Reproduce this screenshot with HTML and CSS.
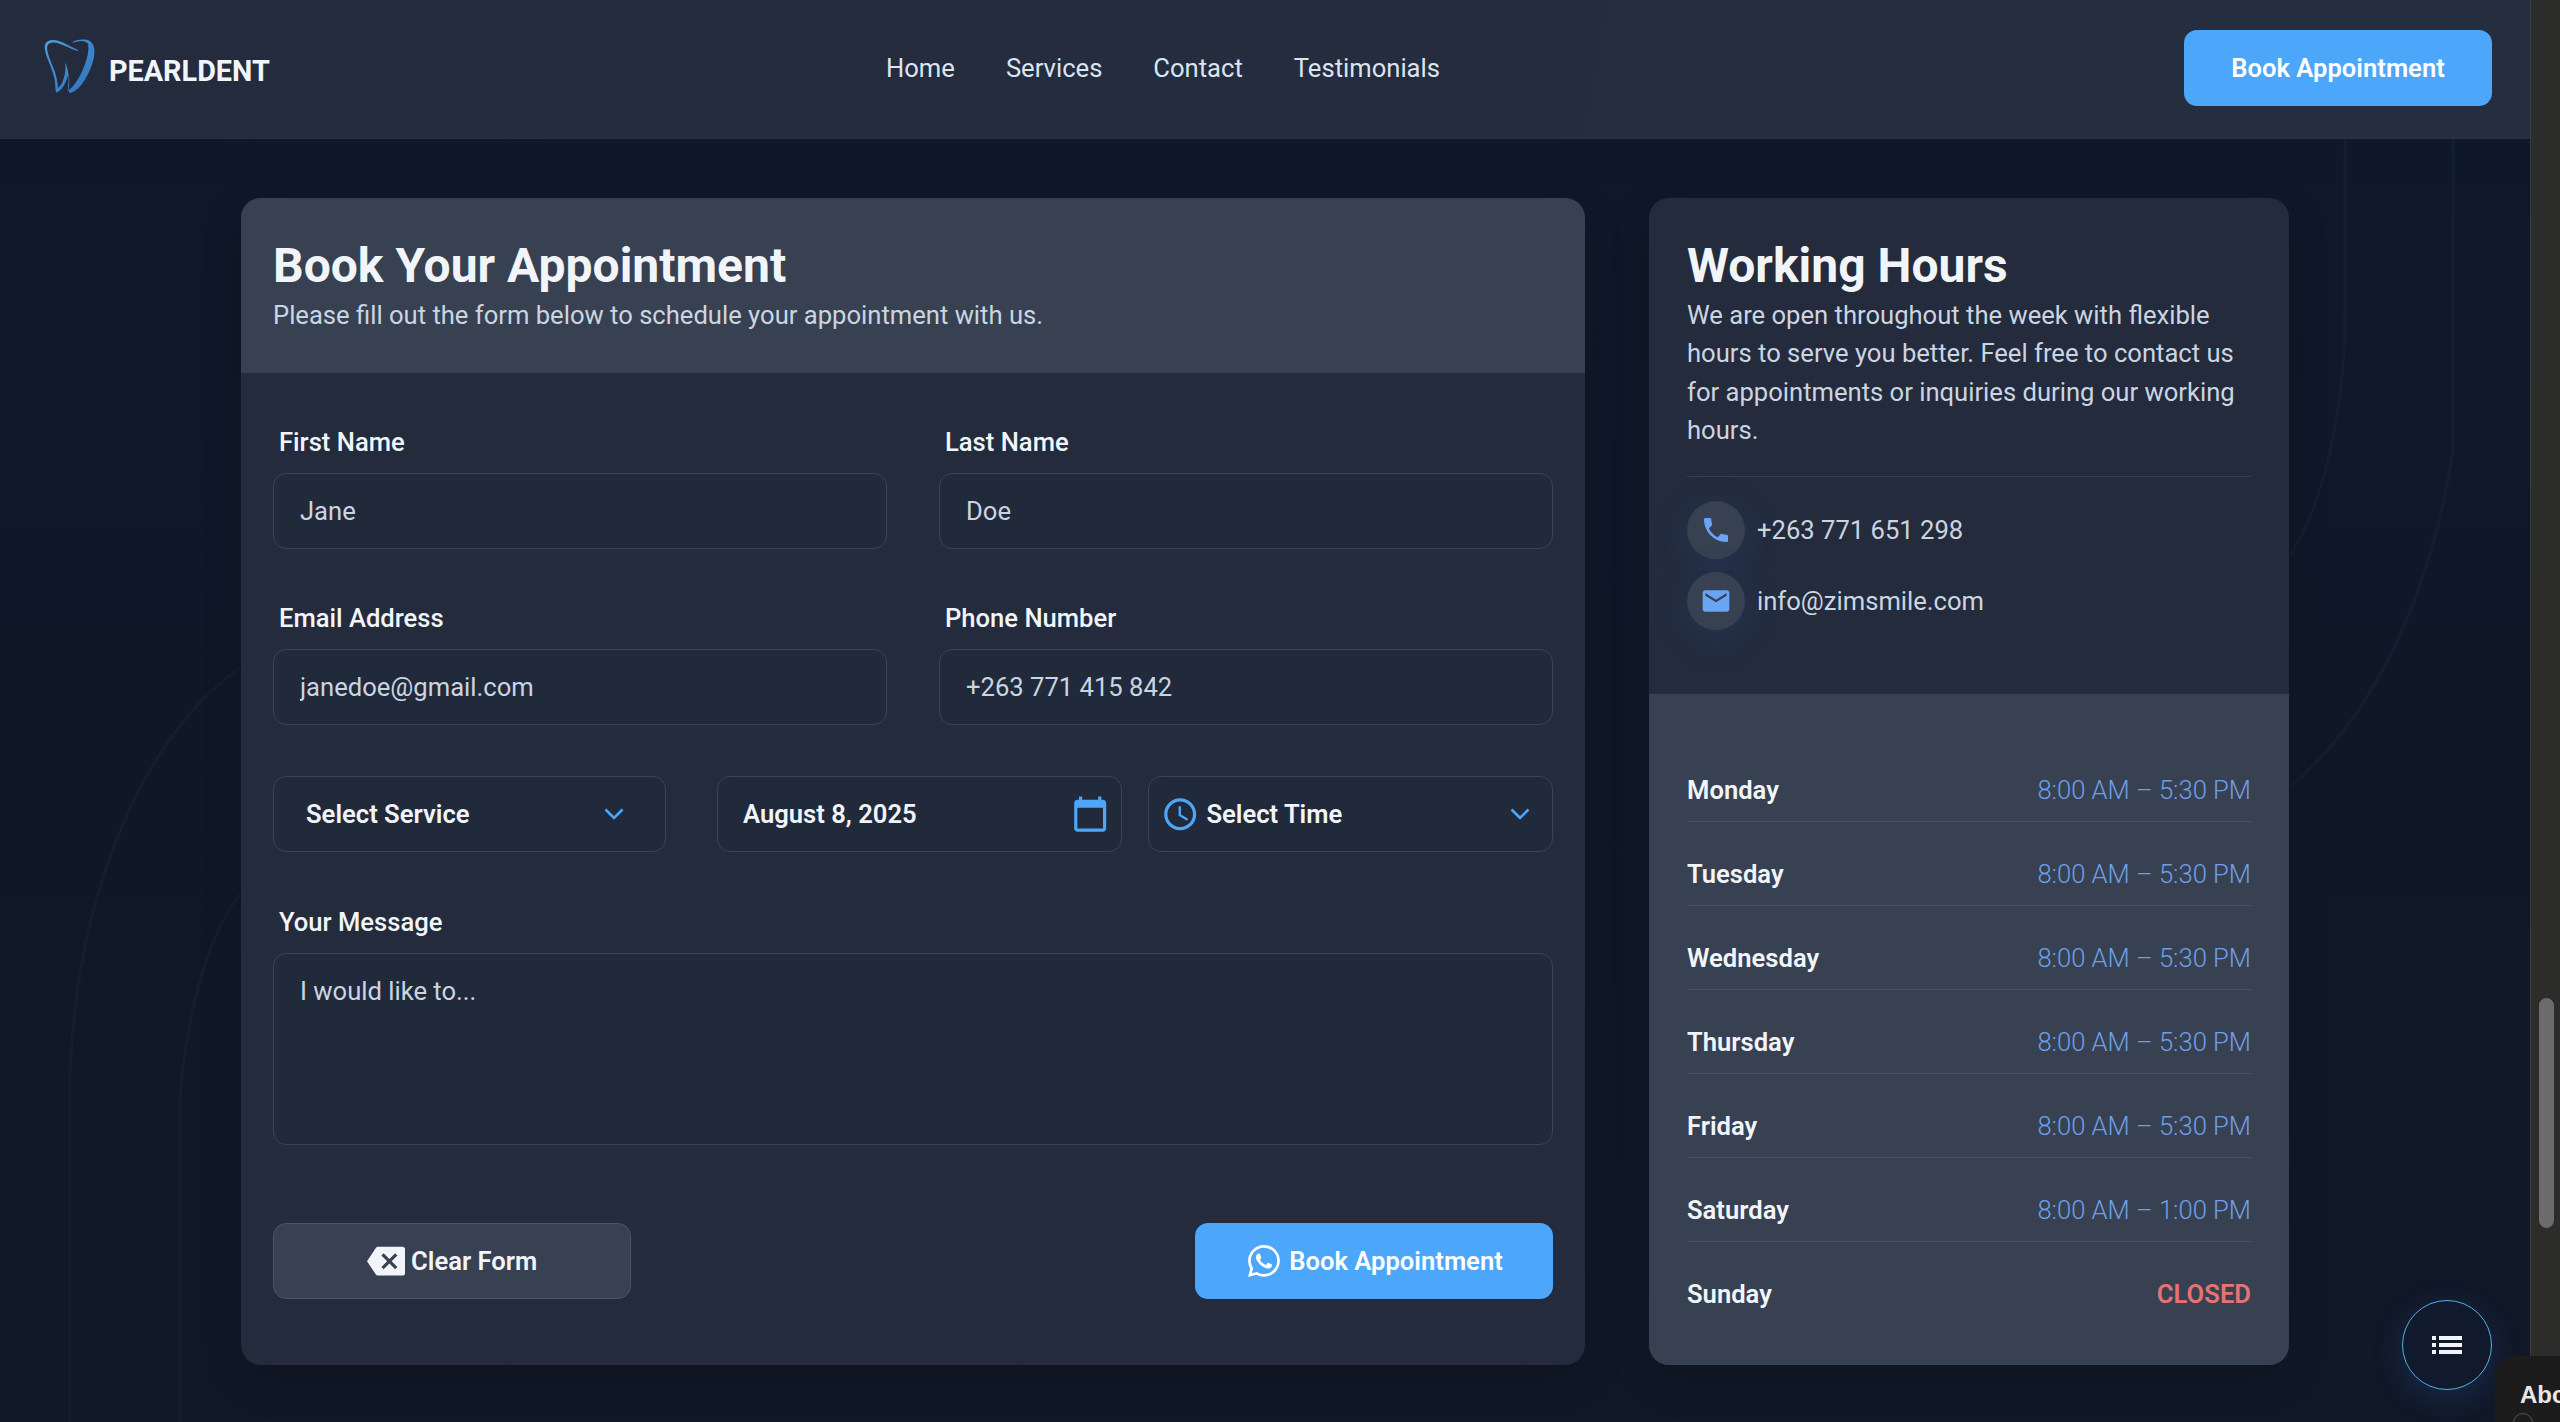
FILE: index.html
```html
<!DOCTYPE html>
<html lang="en">
<head>
<meta charset="UTF-8">
<meta name="viewport" content="width=device-width, initial-scale=1.0">
<title>PearlDent - Book Appointment</title>
<link rel="stylesheet" href="styles.css">
</head>
<body>
  <div class="page">
    <!-- faint tooth outlines behind the cards -->
    <svg class="bg-arcs" viewBox="0 0 2530 1422">
      <path d="M70 1422V1072C78 880 150 730 240 668"/>
      <path d="M180 1422V1098C186 1020 205 940 240 894"/>
      <path d="M2345 138V339C2340 430 2320 510 2290 555"/>
      <path d="M2453 138V451C2430 600 2370 720 2290 787"/>
    </svg>

    <header class="topbar">
      <a class="brand" href="#">
        <svg class="brand-logo" viewBox="0 0 51 54">
          <defs>
            <linearGradient id="toothBlue" x1="0" y1="0" x2="1" y2="1">
              <stop offset="0" stop-color="#4a9fd8"/>
              <stop offset="1" stop-color="#2f6fc0"/>
            </linearGradient>
          </defs>
          <path fill="url(#toothBlue)" d="M1 6C2 1 9 0 15 2c6 2 12 6 19 9 1 .4.4 1-.6.8C27 10 20 6 14 4.200 9 2.800 4 3.500 3.200 7.500 2.500 12 6 21 9.500 29c3 7 4 14 4.500 20 2.500-1.500 5-6 6.500-12.500 1-4.500 1.300-9 .5-13 2 3 3.600 9 3.500 15-.1 6-.5 10-.8 13.500 6-3.500 13-15 17-26 2.500-7 4.500-14 3.500-21C43.300 3 38 1 33 2.500c-2 .6-4 1.300-5 1 3-2.500 8-3.500 13-3 6 .5 9.500 5 9.500 12 0 9-4.500 20-10 29-4 6.500-9.500 11.500-14.500 12.500-1.500-.3-1.500-3-1-7 .3-3.500.5-8-.5-12.500C22.500 43 18 52 12.500 53.500 11 53 11.800 47 10.500 40 8.500 30 3.500 21 1.500 13.500.8 10.500.6 8 1 6z"/>
        </svg>
        <span class="brand-name">PEARLDENT</span>
      </a>
      <nav class="nav">
        <a href="#">Home</a>
        <a href="#">Services</a>
        <a href="#">Contact</a>
        <a href="#">Testimonials</a>
      </nav>
      <a class="btn btn-primary topbar-btn" href="#">Book Appointment</a>
    </header>

    <main class="content">
      <section class="card form-card">
        <div class="form-head">
          <h1>Book Your Appointment</h1>
          <p>Please fill out the form below to schedule your appointment with us.</p>
        </div>
        <form class="form-body">
          <div class="two-col">
            <div class="field">
              <label>First Name</label>
              <input type="text" placeholder="Jane">
            </div>
            <div class="field">
              <label>Last Name</label>
              <input type="text" placeholder="Doe">
            </div>
          </div>
          <div class="two-col">
            <div class="field">
              <label>Email Address</label>
              <input type="text" placeholder="janedoe@gmail.com">
            </div>
            <div class="field">
              <label>Phone Number</label>
              <input type="text" placeholder="+263 771 415 842">
            </div>
          </div>
          <div class="pickers">
            <div class="picker picker-service">
              <span>Select Service</span>
              <svg class="chevron" viewBox="0 0 20 12"><path d="M1.500 1.500 10 10l8.500-8.500"/></svg>
            </div>
            <div class="picker picker-date">
              <span>August 8, 2025</span>
              <svg class="picker-icon" viewBox="0 0 24 24"><path d="M20 3h-1V1h-2v2H7V1H5v2H4c-1.100 0-2 .9-2 2v16c0 1.100.9 2 2 2h16c1.100 0 2-.9 2-2V5c0-1.100-.9-2-2-2zm0 18H4V8h16v13z"/></svg>
            </div>
            <div class="picker picker-time">
              <svg class="picker-icon" viewBox="0 0 24 24"><path d="M11.990 2C6.470 2 2 6.480 2 12s4.470 10 9.990 10C17.520 22 22 17.520 22 12S17.520 2 11.990 2zM12 20c-4.420 0-8-3.580-8-8s3.580-8 8-8 8 3.580 8 8-3.580 8-8 8zm.5-13H11v6l5.250 3.150.75-1.230-4.500-2.670z"/></svg>
              <span>Select Time</span>
              <svg class="chevron" viewBox="0 0 20 12"><path d="M1.500 1.500 10 10l8.500-8.500"/></svg>
            </div>
          </div>
          <div class="field">
            <label>Your Message</label>
            <textarea placeholder="I would like to..."></textarea>
          </div>
          <div class="form-actions">
            <button type="button" class="btn btn-ghost">
              <svg class="btn-icon btn-icon-clear" viewBox="0 0 24 24"><path d="M22 3H7c-.69 0-1.230.35-1.590.88L0 12l5.410 8.110c.36.53.9.89 1.590.89h15c1.100 0 2-.9 2-2V5c0-1.100-.9-2-2-2zm-3 12.590L17.590 17 14 13.410 10.410 17 9 15.590 12.590 12 9 8.410 10.410 7 14 10.590 17.590 7 19 8.410 15.410 12 19 15.590z"/></svg>
              Clear Form
            </button>
            <button type="button" class="btn btn-primary btn-whatsapp">
              <svg class="btn-icon" viewBox="0 0 16 16"><path d="M13.601 2.326A7.854 7.854 0 0 0 7.994 0C3.627 0 .068 3.558.064 7.926c0 1.399.366 2.760 1.057 3.965L0 16l4.204-1.102a7.933 7.933 0 0 0 3.790.965h.004c4.368 0 7.926-3.558 7.930-7.930A7.898 7.898 0 0 0 13.600 2.326zM7.994 14.521a6.573 6.573 0 0 1-3.356-.92l-.24-.144-2.494.654.666-2.433-.156-.251a6.560 6.560 0 0 1-1.007-3.505c0-3.626 2.957-6.584 6.591-6.584a6.560 6.560 0 0 1 4.660 1.931 6.557 6.557 0 0 1 1.928 4.660c-.004 3.639-2.961 6.592-6.592 6.592zm3.615-4.934c-.197-.099-1.170-.578-1.353-.646-.182-.065-.315-.099-.445.099-.133.197-.513.646-.627.775-.114.133-.232.148-.43.05-.197-.1-.836-.308-1.592-.985-.59-.525-.985-1.175-1.103-1.372-.114-.198-.011-.304.088-.403.087-.088.197-.232.296-.346.1-.114.133-.198.198-.33.065-.134.034-.248-.015-.347-.05-.099-.445-1.076-.612-1.470-.16-.389-.323-.335-.445-.34-.114-.007-.247-.007-.38-.007a.729.729 0 0 0-.529.247c-.182.198-.691.677-.691 1.654 0 .977.71 1.916.81 2.049.098.133 1.394 2.132 3.383 2.992.47.205.84.326 1.129.418.475.152.904.129 1.246.08.38-.058 1.171-.48 1.338-.943.164-.464.164-.86.114-.943-.049-.084-.182-.133-.38-.232z"/></svg>
              Book Appointment
            </button>
          </div>
        </form>
      </section>

      <aside class="card hours-card">
        <div class="hours-intro">
          <h2>Working Hours</h2>
          <p>We are open throughout the week with flexible hours to serve you better. Feel free to contact us for appointments or inquiries during our working hours.</p>
          <div class="contact-list">
            <div class="contact-row">
              <span class="contact-icon">
                <svg viewBox="0 0 24 24"><path d="M6.620 10.790c1.440 2.830 3.760 5.140 6.590 6.590l2.200-2.200c.27-.27.67-.36 1.020-.24 1.120.37 2.330.57 3.570.57.55 0 1 .45 1 1V20c0 .55-.45 1-1 1-9.390 0-17-7.610-17-17 0-.55.45-1 1-1h3.500c.55 0 1 .45 1 1 0 1.250.2 2.450.57 3.570.11.35.03.74-.25 1.020l-2.200 2.200z"/></svg>
              </span>
              <span>+263 771 651 298</span>
            </div>
            <div class="contact-row">
              <span class="contact-icon">
                <svg viewBox="0 0 24 24"><path d="M20 4H4c-1.100 0-1.990.9-1.990 2L2 18c0 1.100.9 2 2 2h16c1.100 0 2-.9 2-2V6c0-1.100-.9-2-2-2zm0 4l-8 5-8-5V6l8 5 8-5v2z"/></svg>
              </span>
              <span>info@zimsmile.com</span>
            </div>
          </div>
        </div>
        <ul class="hours-list">
          <li><span class="day">Monday</span><span class="time">8:00 AM – 5:30 PM</span></li>
          <li><span class="day">Tuesday</span><span class="time">8:00 AM – 5:30 PM</span></li>
          <li><span class="day">Wednesday</span><span class="time">8:00 AM – 5:30 PM</span></li>
          <li><span class="day">Thursday</span><span class="time">8:00 AM – 5:30 PM</span></li>
          <li><span class="day">Friday</span><span class="time">8:00 AM – 5:30 PM</span></li>
          <li><span class="day">Saturday</span><span class="time">8:00 AM – 1:00 PM</span></li>
          <li><span class="day">Sunday</span><span class="closed">CLOSED</span></li>
        </ul>
      </aside>
    </main>

    <button class="fab" type="button">
      <svg viewBox="0 0 30 18"><path d="M0 0h4v4H0zM7 0h23v4H7zM0 7h4v4H0zM7 7h23v4H7zM0 14h4v4H0zM7 14h23v4H7z"/></svg>
    </button>
  </div>

  <div class="scrollbar"><div class="scrollbar-thumb"></div></div>

  <div class="corner-popup">
    <span class="corner-title">Abc</span>
    <span class="corner-dot"></span>
  </div>
</body>
</html>
```

FILE: styles.css
```css
* {
  box-sizing: border-box;
}
html, body {
  height: 100%;
}
body {
  margin: 0;
  display: flex;
  overflow: hidden;
  position: relative;
  background-color: #111827;
  font-family: Roboto, "Liberation Sans", sans-serif;
  font-size: 25.6px;
  color: #cbd5e1;
}
a {
  color: inherit;
  text-decoration: none;
}
.page {
  flex: 1;
  position: relative;
  background: linear-gradient(180deg, #0f1829 0%, #111827 100%);
}
.bg-arcs {
  position: absolute;
  left: 0;
  top: 0;
  width: 2530px;
  height: 1422px;
  fill: none;
  stroke: #131f2e;
  stroke-width: 3;
}

/* top bar */
.topbar {
  position: relative;
  height: 138px;
  padding: 0 38px 2px 44px;
  display: flex;
  align-items: center;
  background: linear-gradient(100deg, #232b3c 0%, #252e3f 100%);
  box-shadow: 0 1px 0 #273142;
}
.brand {
  width: 842px;
  margin-bottom: 5px;
  display: flex;
  align-items: flex-start;
  gap: 14px;
}
.brand-logo {
  width: 51px;
  height: 54px;
}
.brand-name {
  margin-top: 12px;
  font-size: 28.8px;
  line-height: 40px;
  font-weight: 700;
  color: #f1f5f9;
}
.nav {
  display: flex;
  gap: 51px;
  flex: 1;
  margin-bottom: 1px;
  color: #dbe4ef;
}
.btn {
  height: 76px;
  display: flex;
  align-items: center;
  justify-content: center;
  gap: 6px;
  border-radius: 13px;
  border: 0;
  font-family: inherit;
  font-size: 25.6px;
  font-weight: 600;
  color: #fff;
}
.btn-primary {
  width: 358px;
  background-color: #4ca6f9;
}
.btn-whatsapp {
  gap: 9px;
  padding-left: 9px;
}
.topbar-btn {
  width: 308px;
}
.btn-ghost {
  width: 358px;
  background-color: #374151;
  border: 1px solid #4b5563;
  color: #f1f5f9;
}
.btn-icon {
  width: 32px;
  height: 32px;
  fill: currentColor;
}
.btn-icon-clear {
  width: 38.4px;
  height: 38.4px;
}

/* cards */
.content {
  position: relative;
  padding: 60px 241px 0;
  display: flex;
  justify-content: space-between;
  align-items: flex-start;
}
.card {
  height: 1167px;
  border-radius: 20px;
  overflow: hidden;
  background-color: #232b3c;
  box-shadow: 0 16px 40px rgba(0, 0, 0, 0.15);
}
.form-card {
  width: 1344px;
}
.hours-card {
  width: 640px;
  display: flex;
  flex-direction: column;
}
h1, h2 {
  margin: 0;
  font-size: 48px;
  line-height: 56px;
  font-weight: 700;
  color: #f1f5f9;
}
.form-head {
  height: 175px;
  padding: 40px 32px 0;
  background-color: #374151;
}
.form-head p {
  margin: 2px 0 0;
  line-height: 38px;
  color: #cbd5e1;
}

/* form */
.form-body {
  padding: 51px 32px 0;
}
.two-col {
  display: grid;
  grid-template-columns: 1fr 1fr;
  gap: 52px;
  margin-bottom: 51px;
}
.field label {
  display: block;
  padding: 3px 0 0 6px;
  margin-bottom: 16px;
  line-height: 30px;
  font-weight: 500;
  color: #f1f5f9;
}
input, textarea, .picker {
  width: 100%;
  height: 76px;
  border: 1px solid #3a4456;
  border-radius: 13px;
  background-color: #212a3b;
  font-family: inherit;
  font-size: 25.6px;
}
input, textarea {
  display: block;
  padding: 0 26px;
}
input::placeholder, textarea::placeholder {
  color: #cbd5e1;
  opacity: 1;
}
textarea {
  height: 192px;
  padding: 22px 26px;
  resize: none;
  line-height: 30px;
}
.pickers {
  display: flex;
  margin-bottom: 52px;
}
.picker {
  display: flex;
  align-items: center;
  font-weight: 600;
  color: #f1f5f9;
}
.picker-service {
  width: 393px;
  padding: 0 41px 0 32px;
  justify-content: space-between;
  margin-right: 51px;
}
.picker-date {
  width: 405px;
  padding: 0 12px 0 25px;
  justify-content: space-between;
  margin-right: 26px;
}
.picker-time {
  width: 405px;
  padding: 0 22px 0 12px;
  gap: 7px;
}
.picker-time .chevron {
  margin-left: auto;
}
.picker-icon {
  width: 38.4px;
  height: 38.4px;
  fill: #4ca6f9;
}
.chevron {
  width: 20px;
  height: 12px;
  fill: none;
  stroke: #4ca6f9;
  stroke-width: 2.6;
}
.form-actions {
  margin-top: 78px;
  display: flex;
  justify-content: space-between;
}

/* working hours */
.hours-intro {
  height: 496px;
  padding: 40px 38px 0;
}
.hours-intro p {
  margin: 2px 0 0;
  padding-bottom: 26px;
  line-height: 38.4px;
  border-bottom: 1px solid #374151;
  color: #cbd5e1;
}
.contact-list {
  margin-top: 24px;
  display: flex;
  flex-direction: column;
  gap: 13px;
}
.contact-row {
  display: flex;
  align-items: center;
  gap: 12px;
}
.contact-icon {
  width: 58px;
  height: 58px;
  border-radius: 50%;
  display: flex;
  align-items: center;
  justify-content: center;
  background-color: #374151;
  box-shadow: 0 8px 40px rgba(59, 130, 246, 0.14);
}
.contact-icon svg {
  width: 32px;
  height: 32px;
  fill: #6ba3f5;
}
.hours-list {
  flex: 1;
  margin: 0;
  padding: 44px 38px 0;
  list-style: none;
  background-color: #374151;
}
.hours-list li {
  height: 84px;
  padding-top: 37px;
  display: flex;
  justify-content: space-between;
  line-height: 30px;
  border-bottom: 1px solid #465165;
}
.hours-list li:last-child {
  border-bottom: 0;
}
.day {
  font-weight: 600;
  color: #f1f5f9;
}
.time {
  font-weight: 300;
  color: #6f9fe6;
}
.closed {
  font-weight: 600;
  color: #e57373;
}

/* floating bits */
.fab {
  position: absolute;
  left: 2402px;
  top: 1300px;
  width: 90px;
  height: 90px;
  padding: 0;
  display: flex;
  align-items: center;
  justify-content: center;
  border-radius: 50%;
  border: 1.500px solid #58aede;
  background-color: #111a2c;
  box-shadow: 0 8px 32px rgba(59, 130, 246, 0.18);
}
.fab svg {
  width: 30px;
  height: 18px;
  fill: #f1f5f9;
}
.scrollbar {
  width: 30px;
  position: relative;
  background-color: #2c2c2a;
  border-left: 1px solid #3c3c3a;
}
.scrollbar-thumb {
  position: absolute;
  left: 8px;
  top: 998px;
  width: 15px;
  height: 230px;
  border-radius: 8px;
  background-color: #6b6b6b;
}
.corner-popup {
  position: absolute;
  left: 2495px;
  top: 1356px;
  right: 0;
  bottom: 0;
  padding: 25px 0 0 25px;
  border-top-left-radius: 20px;
  background-color: #1c1c1c;
  overflow: hidden;
}
.corner-title {
  display: block;
  font-family: "Liberation Sans", sans-serif;
  font-size: 24px;
  line-height: 28px;
  font-weight: 700;
  color: #e8e8e8;
}
.corner-dot {
  display: block;
  width: 20px;
  height: 20px;
  margin: 4px 0 0 -7px;
  border-radius: 50%;
  border: 1px solid #555;
}
```
